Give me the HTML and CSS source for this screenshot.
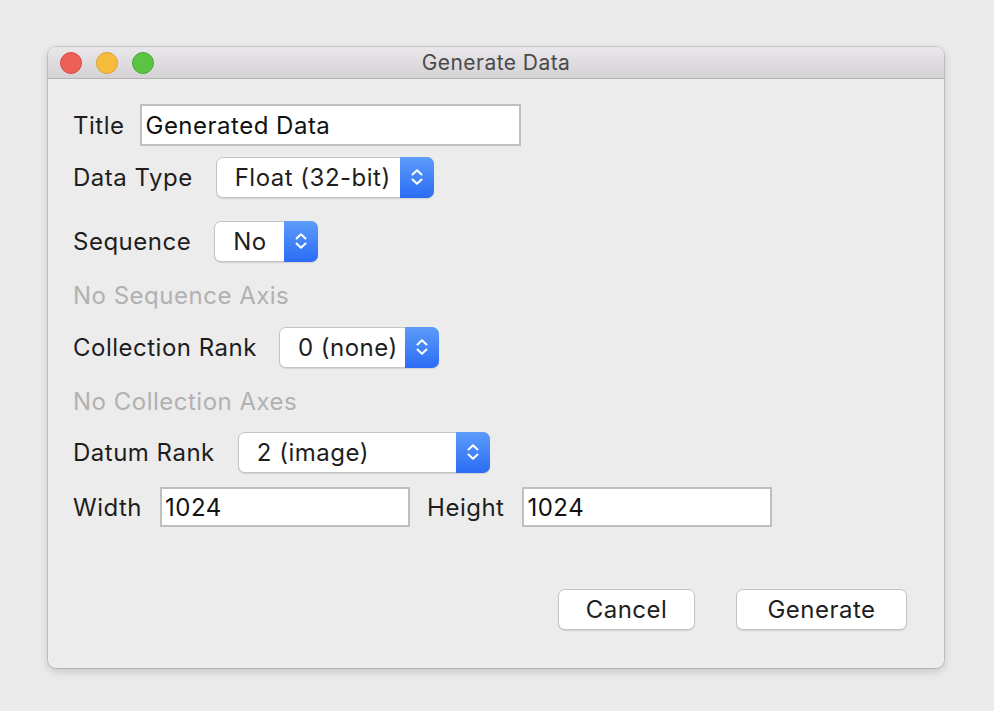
FILE: index.html
```html
<!DOCTYPE html>
<html>
<head>
<meta charset="utf-8">
<link rel="stylesheet" href="styles.css">
</head>
<body>
<div class="screen">
  <div class="window">
    <div class="titlebar">
      <div class="lights">
        <span class="light red"></span>
        <span class="light yellow"></span>
        <span class="light green"></span>
      </div>
      <div class="wintitle">Generate Data</div>
    </div>
    <div class="content">
      <div class="row r-title">
        <span class="label">Title</span>
        <div class="field f-title">Generated Data</div>
      </div>
      <div class="row r-type">
        <span class="label">Data Type</span>
        <div class="popup p-type"><span class="ptext">Float (32-bit)</span><span class="parrow"><svg width="14" height="22" viewBox="0 0 14 22"><path d="M2.5 8.5 L7 4.2 L11.5 8.5 M2.5 13.5 L7 17.8 L11.5 13.5" fill="none" stroke="#fff" stroke-width="2" stroke-linecap="round" stroke-linejoin="round"/></svg></span></div>
      </div>
      <div class="row r-seq">
        <span class="label">Sequence</span>
        <div class="popup p-seq"><span class="ptext">No</span><span class="parrow"><svg width="14" height="22" viewBox="0 0 14 22"><path d="M2.5 8.5 L7 4.2 L11.5 8.5 M2.5 13.5 L7 17.8 L11.5 13.5" fill="none" stroke="#fff" stroke-width="2" stroke-linecap="round" stroke-linejoin="round"/></svg></span></div>
      </div>
      <div class="row note n-seq">No Sequence Axis</div>
      <div class="row r-coll">
        <span class="label">Collection Rank</span>
        <div class="popup p-coll"><span class="ptext">0 (none)</span><span class="parrow"><svg width="14" height="22" viewBox="0 0 14 22"><path d="M2.5 8.5 L7 4.2 L11.5 8.5 M2.5 13.5 L7 17.8 L11.5 13.5" fill="none" stroke="#fff" stroke-width="2" stroke-linecap="round" stroke-linejoin="round"/></svg></span></div>
      </div>
      <div class="row note n-coll">No Collection Axes</div>
      <div class="row r-datum">
        <span class="label">Datum Rank</span>
        <div class="popup p-datum"><span class="ptext">2 (image)</span><span class="parrow"><svg width="14" height="22" viewBox="0 0 14 22"><path d="M2.5 8.5 L7 4.2 L11.5 8.5 M2.5 13.5 L7 17.8 L11.5 13.5" fill="none" stroke="#fff" stroke-width="2" stroke-linecap="round" stroke-linejoin="round"/></svg></span></div>
      </div>
      <div class="row r-size">
        <span class="label">Width</span>
        <div class="field f-size">1024</div>
        <span class="label l-height">Height</span>
        <div class="field f-size">1024</div>
      </div>
      <div class="buttons">
        <button class="btn b-cancel">Cancel</button>
        <button class="btn b-generate">Generate</button>
      </div>
    </div>
  </div>
</div>
</body>
</html>
```

FILE: styles.css
```css
html, body {
  margin: 0;
  padding: 0;
  background: #ebebeb;
}
body {
  width: 994px;
  height: 711px;
  overflow: hidden;
  font-family: Inter, "Liberation Sans", sans-serif;
}
.screen {
  padding: 47px 0 0 48px;
}
.window {
  width: 896px;
  height: 621px;
  background: #ececec;
  border-radius: 8px;
  box-shadow: 0 0 0 1px rgba(0,0,0,0.12), 0 3px 10px rgba(0,0,0,0.18);
  display: flex;
  flex-direction: column;
  overflow: hidden;
}
.titlebar {
  height: 31px;
  flex: none;
  position: relative;
  background: linear-gradient(#e9e7e9, #d4d2d4);
  border-bottom: 1px solid #b3b1b3;
  display: flex;
  align-items: center;
  justify-content: center;
}
.lights {
  position: absolute;
  left: 12px;
  top: 5px;
  display: flex;
  gap: 14px;
}
.light {
  width: 20px;
  height: 20px;
  border-radius: 50%;
  display: block;
}
.red { background: #ee5f58; border: 1px solid #d9493f; }
.yellow { background: #f6bd3c; border: 1px solid #dea12f; }
.green { background: #5cc443; border: 1px solid #44a834; }
.wintitle {
  font-size: 21px;
  color: #4a4a4a;
  letter-spacing: 0.45px;
}
.content {
  flex: 1;
  display: flex;
  flex-direction: column;
  padding: 25px 37px 38px 25px;
  color: #1e1e1e;
  font-size: 24px;
  letter-spacing: 0.5px;
}
.row {
  display: flex;
  align-items: center;
  height: 42px;
  flex: none;
}
.label {
  margin-right: 23px;
  white-space: nowrap;
}
.r-title .label { margin-right: 16px; }
.r-size .label { margin-right: 18px; }
.r-type { margin-top: 10px; }
.r-seq { margin-top: 22px; }
.note {
  color: #b1b1b1;
  height: 30px;
}
.n-seq { margin-top: 18px; }
.r-coll { margin-top: 16px; }
.n-coll { margin-top: 18px; }
.r-datum { margin-top: 15px; }
.r-size { margin-top: 14px; height: 40px; }
.r-coll .label { margin-right: 22px; }
.l-height { margin-left: 17px; }
.field {
  box-sizing: border-box;
  height: 42px;
  background: #fff;
  border: 2px solid #bfbfbf;
  padding: 0 3px;
  display: flex;
  align-items: center;
  color: #111;
}
.f-title { width: 381px; }
.f-size { width: 250px; height: 40px; }
.popup {
  box-sizing: border-box;
  height: 41px;
  display: flex;
  background: #fff;
  border: 1px solid #c4c4c4;
  border-radius: 7px;
  box-shadow: 0 1px 1px rgba(0,0,0,0.12);
}
.ptext {
  flex: 1;
  display: flex;
  align-items: center;
  padding-left: 18px;
  white-space: nowrap;
}
.parrow {
  width: 34px;
  margin: -1px -1px -1px 0;
  border-radius: 0 7px 7px 0;
  background: linear-gradient(#5c9cf9, #2b6cf6);
  display: flex;
  align-items: center;
  justify-content: center;
}
.p-type { width: 218px; }
.p-seq { width: 104px; }
.p-coll { width: 160px; }
.p-datum { width: 252px; }
.buttons {
  margin-top: auto;
  display: flex;
  justify-content: flex-end;
  gap: 41px;
}
.btn {
  height: 41px;
  font-family: inherit;
  font-size: 24px;
  letter-spacing: 0.5px;
  color: #1e1e1e;
  background: #fff;
  border: 1px solid #c4c4c4;
  border-radius: 7px;
  box-shadow: 0 1px 1px rgba(0,0,0,0.12);
  padding: 0;
}
.b-cancel { width: 137px; }
.b-generate { width: 171px; }
```
